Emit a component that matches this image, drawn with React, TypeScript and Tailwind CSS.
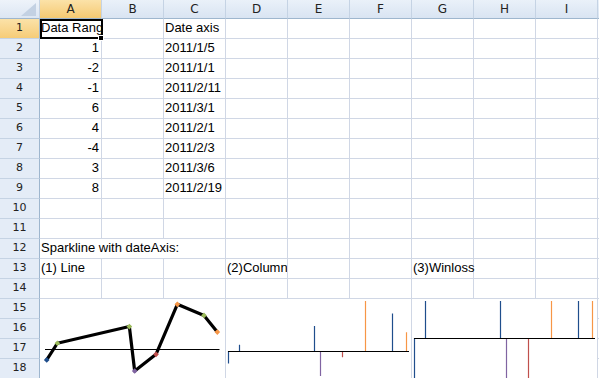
import React from 'react';

const cols = ['A', 'B', 'C', 'D', 'E', 'F', 'G', 'H', 'I'];

type CellData = { text: string; right?: boolean; spill?: boolean };

const data: Record<number, Record<number, CellData>> = {
  1: { 0: { text: 'Data Range' }, 2: { text: 'Date axis' } },
  2: { 0: { text: '1', right: true }, 2: { text: '2011/1/5' } },
  3: { 0: { text: '-2', right: true }, 2: { text: '2011/1/1' } },
  4: { 0: { text: '-1', right: true }, 2: { text: '2011/2/11' } },
  5: { 0: { text: '6', right: true }, 2: { text: '2011/3/1' } },
  6: { 0: { text: '4', right: true }, 2: { text: '2011/2/1' } },
  7: { 0: { text: '-4', right: true }, 2: { text: '2011/2/3' } },
  8: { 0: { text: '3', right: true }, 2: { text: '2011/3/6' } },
  9: { 0: { text: '8', right: true }, 2: { text: '2011/2/19' } },
  12: { 0: { text: 'Sparkline with dateAxis:' } },
  13: { 0: { text: '(1) Line' }, 3: { text: '(2)Column' }, 6: { text: '(3)Winloss', spill: true } },
};

// sorted by date: days since 1/1, value
const points = [
  { d: 0, v: -2, c: '#1f4e8c' },
  { d: 4, v: 1, c: '#9bbb59' },
  { d: 31, v: 4, c: '#9bbb59' },
  { d: 33, v: -4, c: '#8064a2' },
  { d: 41, v: -1, c: '#c0504d' },
  { d: 49, v: 8, c: '#f79646' },
  { d: 59, v: 6, c: '#9bbb59' },
  { d: 64, v: 3, c: '#f79646' },
];
const barColors = ['#1f4e8c', '#1f4e8c', '#1f4e8c', '#8064a2', '#c0504d', '#f79646', '#1f4e8c', '#f79646'];

function RowHeader({ n, active }: { n: number; active?: boolean }) {
  return (
    <div
      className={`w-[40px] h-[20px] shrink-0 flex items-center justify-center border-r border-b border-r-[#9eb6ce] border-b-[#c5d3e4] text-[11px] text-[#222] font-['DejaVu_Sans',sans-serif] ${
        active ? 'bg-gradient-to-b from-[#fbe2a8] to-[#f6cc77]' : 'bg-[#e4ecf7]'
      }`}
    >
      {n}
    </div>
  );
}

function Cell({ row, col }: { row: number; col: number }) {
  const cell = data[row]?.[col];
  const noRight = row === 12 && col < 2;
  return (
    <div
      className={`w-[62px] h-[20px] shrink-0 border-b border-[#d0d7e5] pt-[1px] leading-[15px] text-[13px] text-black whitespace-nowrap ${
        noRight ? 'overflow-visible' : cell?.spill ? 'border-r overflow-visible' : 'border-r overflow-hidden'
      } ${cell?.right ? 'text-right pr-[2px]' : 'pl-[1px]'}`}
    >
      {cell?.text}
    </div>
  );
}

function LineSpark() {
  const x = (d: number) => 46.7 + d * 2.666;
  const y = (v: number) => 348.8 - v * 5.56;
  const pts = points.map((p) => `${x(p.d)},${y(p.v)}`).join(' ');
  return (
    <svg width="185" height="79" viewBox="40 299 185 79" className="block">
      <line x1="45" y1="349.5" x2="219.5" y2="349.5" stroke="#000" strokeWidth="1" />
      <polyline points={pts} fill="none" stroke="#000" strokeWidth="3.2" strokeLinejoin="round" />
      {points.map((p, i) => (
        <rect
          key={i}
          x={x(p.d) - 2}
          y={y(p.v) - 2}
          width="4"
          height="4"
          fill={p.c}
          transform={`rotate(45 ${x(p.d)} ${y(p.v)})`}
        />
      ))}
    </svg>
  );
}

function ColumnSpark() {
  const x = (d: number) => Math.round(228.3 + d * 2.78) + 0.5;
  return (
    <svg width="185" height="79" viewBox="226 299 185 79" className="block">
      {points.map((p, i) => (
        <line
          key={i}
          x1={x(p.d)}
          x2={x(p.d)}
          y1={351}
          y2={351 - p.v * 6.25}
          stroke={barColors[i]}
          strokeWidth="1.2"
        />
      ))}
      <line x1="228" y1="351.5" x2="409" y2="351.5" stroke="#000" strokeWidth="1.2" />
    </svg>
  );
}

function WinLossSpark() {
  const x = (d: number) => Math.round(414.3 + d * 2.78) + 0.5;
  return (
    <svg width="185" height="79" viewBox="412 299 185 79" className="block">
      {points.map((p, i) => (
        <line
          key={i}
          x1={x(p.d)}
          x2={x(p.d)}
          y1={338}
          y2={p.v > 0 ? 301 : 380}
          stroke={barColors[i]}
          strokeWidth="1.2"
        />
      ))}
      <line x1="414" y1="338.5" x2="595" y2="338.5" stroke="#000" strokeWidth="1.2" />
    </svg>
  );
}

export default function App() {
  const rows = Array.from({ length: 14 }, (_, i) => i + 1);
  return (
    <div className="relative w-[599px] h-[378px] overflow-hidden bg-white font-['Liberation_Sans',Arial,sans-serif]">
      {/* column headers */}
      <div className="flex h-[19px]">
        <div className="relative w-[40px] h-[19px] shrink-0 border-r border-b border-r-[#c5d3e4] border-b-[#9eb6ce] bg-gradient-to-b from-[#eef3fa] to-[#dce6f3]">
          <svg width="39" height="18" className="absolute left-0 top-0">
            <polygon points="21,16 36,16 36,3" fill="#c3d1e3" />
          </svg>
        </div>
        {[...cols, 'J'].map((c, i) => (
          <div
            key={c}
            className={`w-[62px] h-[19px] shrink-0 flex items-center justify-center border-r border-b border-r-[#c5d3e4] border-b-[#9eb6ce] text-[12px] text-[#222] font-['DejaVu_Sans',sans-serif] ${
              i === 0 ? 'bg-gradient-to-b from-[#fbe2a8] to-[#f5c971]' : 'bg-gradient-to-b from-[#eaf1f9] to-[#d9e4f2]'
            }`}
          >
            {c === 'J' ? '' : c}
          </div>
        ))}
      </div>

      {rows.map((r) => (
        <div key={r} className="flex h-[20px]">
          <RowHeader n={r} active={r === 1} />
          {cols.map((_, ci) => (
            <Cell key={ci} row={r} col={ci} />
          ))}
          <div className="w-[62px] h-[20px] shrink-0 border-b border-[#d0d7e5]" />
        </div>
      ))}

      {/* merged sparkline rows 15-18 */}
      <div className="flex">
        <div className="flex flex-col">
          {[15, 16, 17, 18].map((n) => (
            <RowHeader key={n} n={n} />
          ))}
        </div>
        <div className="w-[186px] h-[80px] shrink-0 border-r border-b border-[#d0d7e5]">
          <LineSpark />
        </div>
        <div className="w-[186px] h-[80px] shrink-0 border-r border-b border-[#d0d7e5]">
          <ColumnSpark />
        </div>
        <div className="w-[186px] h-[80px] shrink-0 border-r border-b border-[#d0d7e5]">
          <WinLossSpark />
        </div>
        <div className="flex flex-col">
          {[15, 16, 17, 18].map((n) => (
            <div key={n} className="w-[62px] h-[20px] border-b border-[#d0d7e5]" />
          ))}
        </div>
      </div>

      {/* active cell A1 */}
      <div className="absolute left-[40px] top-[19px] w-[63px] h-[20px] border-2 border-black pointer-events-none" />
      <div className="absolute left-[98px] top-[35px] w-[6px] h-[6px] bg-black border border-white" />
    </div>
  );
}
